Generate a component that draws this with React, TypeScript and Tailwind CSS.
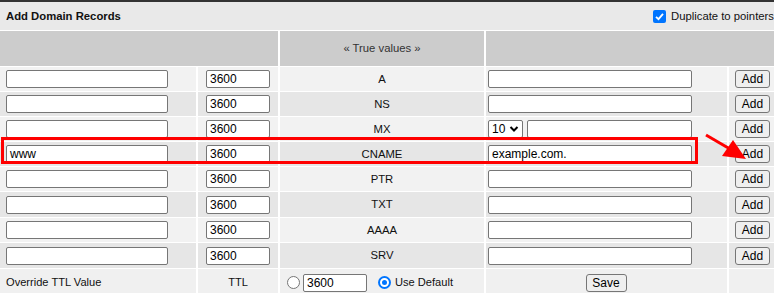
import React from 'react';

const types = ['A', 'NS', 'MX', 'CNAME', 'PTR', 'TXT', 'AAAA', 'SRV'];

function TextBox({ value = '', className = '' }: { value?: string; className?: string }) {
    return (
        <div
            className={`h-[18px] border border-[#767676] rounded-[2px] bg-white px-[3px] text-[12px] leading-[16px] text-black ${className}`}
        >
            {value}
        </div>
    );
}

function Btn({ label, className = '' }: { label: string; className?: string }) {
    return (
        <div
            className={`h-[18px] border border-[#767676] rounded-[3px] bg-[#efefef] text-[12px] leading-[16px] text-black flex items-center justify-center ${className}`}
        >
            {label}
        </div>
    );
}

function Radio({ checked }: { checked?: boolean }) {
    return checked ? (
        <div className="w-[13px] h-[13px] rounded-full bg-[#0075ff] flex items-center justify-center">
            <div className="w-[9px] h-[9px] rounded-full border-2 border-white bg-[#0075ff]" />
        </div>
    ) : (
        <div className="w-[13px] h-[13px] rounded-full border border-[#767676] bg-white" />
    );
}

export default function App() {
    return (
        <div className="relative w-[774px] h-[293px] overflow-hidden bg-white font-['Liberation_Sans',Arial,sans-serif] text-[11px] text-[#222]">
            <div className="h-[2px] bg-[#333]" />
            <div className="grid grid-cols-[196px_80px_204px_241px_45px] grid-rows-[28px_35px_24px_24px_24px_24px_24px_25px_24px_25px_27px] gap-x-[2px] gap-y-px">
                {/* title */}
                <div className="col-span-5 bg-[#e9e9e9] flex items-center justify-between pl-[6px]">
                    <span className="font-bold text-[11.3px] text-[#111]">Add Domain Records</span>
                    <label className="flex items-center gap-[5px] text-[11.3px] text-[#111]">
                        <span className="w-[13px] h-[13px] rounded-[2px] bg-[#0075ff] flex items-center justify-center">
                            <svg width="11" height="11" viewBox="0 0 11 11">
                                <path d="M2 5.8 L4.5 8.2 L9 2.8" fill="none" stroke="white" strokeWidth="1.8" />
                            </svg>
                        </span>
                        Duplicate to pointers
                    </label>
                </div>

                {/* header */}
                <div className="col-span-2 bg-[#cccccc]" />
                <div className="bg-[#cccccc] flex items-center justify-center text-[11.3px] text-[#333]">
                    « True values »
                </div>
                <div className="col-span-2 bg-[#cccccc]" />

                {types.map((t, i) => {
                    const bg = i % 2 === 0 ? 'bg-[#f2f2f2]' : 'bg-[#e6e6e6]';
                    return (
                        <React.Fragment key={t}>
                            <div className={`${bg} flex items-center pl-[6px]`}>
                                <TextBox value={t === 'CNAME' ? 'www' : ''} className="w-[162px]" />
                            </div>
                            <div className={`${bg} flex items-center pl-[8px]`}>
                                <TextBox value="3600" className="w-[64px]" />
                            </div>
                            <div className={`${bg} flex items-center justify-center text-[11.3px] text-[#111]`}>{t}</div>
                            <div className={`${bg} flex items-center pl-[2px] gap-[4px]`}>
                                {t === 'MX' ? (
                                    <>
                                        <div className="h-[18px] w-[35px] border border-[#767676] rounded-[2px] bg-white flex items-center justify-between px-[3px] text-[12px] text-black">
                                            10
                                            <svg width="10" height="8" viewBox="0 0 10 8">
                                                <path d="M1.5 2 L5 5.5 L8.5 2" fill="none" stroke="black" strokeWidth="2" />
                                            </svg>
                                        </div>
                                        <TextBox className="w-[165px]" />
                                    </>
                                ) : (
                                    <TextBox value={t === 'CNAME' ? 'example.com.' : ''} className="w-[204px]" />
                                )}
                            </div>
                            <div className={`${bg} flex items-center pl-[6px]`}>
                                <Btn label="Add" className="w-[35px]" />
                            </div>
                        </React.Fragment>
                    );
                })}

                {/* ttl row */}
                <div className="bg-[#f0f0f0] flex items-center pl-[6px] text-[11.1px] text-[#111]">Override TTL Value</div>
                <div className="bg-[#f0f0f0] flex items-center justify-center text-[11.1px] text-[#111]">TTL</div>
                <div className="bg-[#f0f0f0] flex items-center pl-[7px] text-[11.1px] text-[#111]">
                    <Radio />
                    <TextBox value="3600" className="w-[64px] ml-[3px]" />
                    <span className="ml-[11px]">
                        <Radio checked />
                    </span>
                    <span className="ml-[4px]">Use Default</span>
                </div>
                <div className="bg-[#f0f0f0] flex items-center justify-center">
                    <Btn label="Save" className="w-[41px] mr-[1px]" />
                </div>
                <div className="bg-[#f0f0f0]" />
            </div>

            {/* highlight */}
            <div className="absolute left-[1px] top-[137px] w-[697px] h-[27px] border-[3px] border-[#ff0000]" />
            <svg className="absolute left-0 top-0" width="774" height="293" viewBox="0 0 774 293">
                <line x1="706" y1="135" x2="730" y2="149" stroke="#ff0000" strokeWidth="3" />
                <polygon points="746,159 722,156 733,140" fill="#ff0000" />
            </svg>
        </div>
    );
}
